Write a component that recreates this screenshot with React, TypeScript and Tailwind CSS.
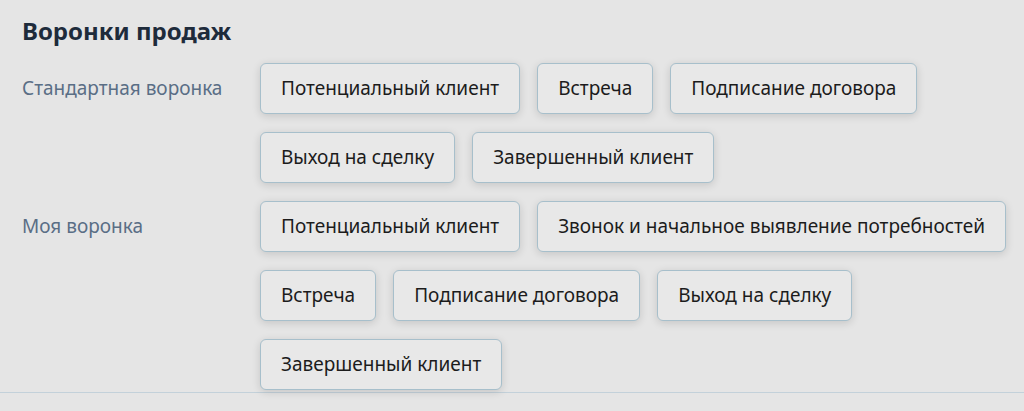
import React from 'react';

const funnels = [
  {
    name: 'Стандартная воронка',
    stages: ['Потенциальный клиент', 'Встреча', 'Подписание договора', 'Выход на сделку', 'Завершенный клиент'],
  },
  {
    name: 'Моя воронка',
    stages: [
      'Потенциальный клиент',
      'Звонок и начальное выявление потребностей',
      'Встреча',
      'Подписание договора',
      'Выход на сделку',
      'Завершенный клиент',
    ],
  },
];

export default function App() {
  return (
    <div className="w-[1024px] h-[411px] bg-[#e5e5e5] overflow-hidden font-['Noto_Sans',sans-serif]">
      <div className="pl-[22px] pt-[13px] pb-[2px] border-b border-[#c3d1da]">
        <h1 className="text-[24px] leading-[36px] font-bold text-[#1e2b3b] mb-[14px]">Воронки продаж</h1>
        <div className="flex flex-col gap-[18px]">
          {funnels.map((f) => (
            <div key={f.name} className="flex">
              <div className="w-[238px] h-[51px] shrink-0 flex items-center text-[19px] text-[#5a6e85]">{f.name}</div>
              <div className="flex flex-wrap gap-x-[17px] gap-y-[18px] flex-1">
                {f.stages.map((s, i) => (
                  <button
                    key={i}
                    className="h-[51px] px-[20px] rounded-[6px] border border-[#a7bfcb] bg-[#e8e8e8] text-[19px] text-[#1c1c1c] shadow-[0_2px_8px_rgba(0,0,0,0.14)]"
                  >
                    {s}
                  </button>
                ))}
              </div>
            </div>
          ))}
        </div>
      </div>
    </div>
  );
}
